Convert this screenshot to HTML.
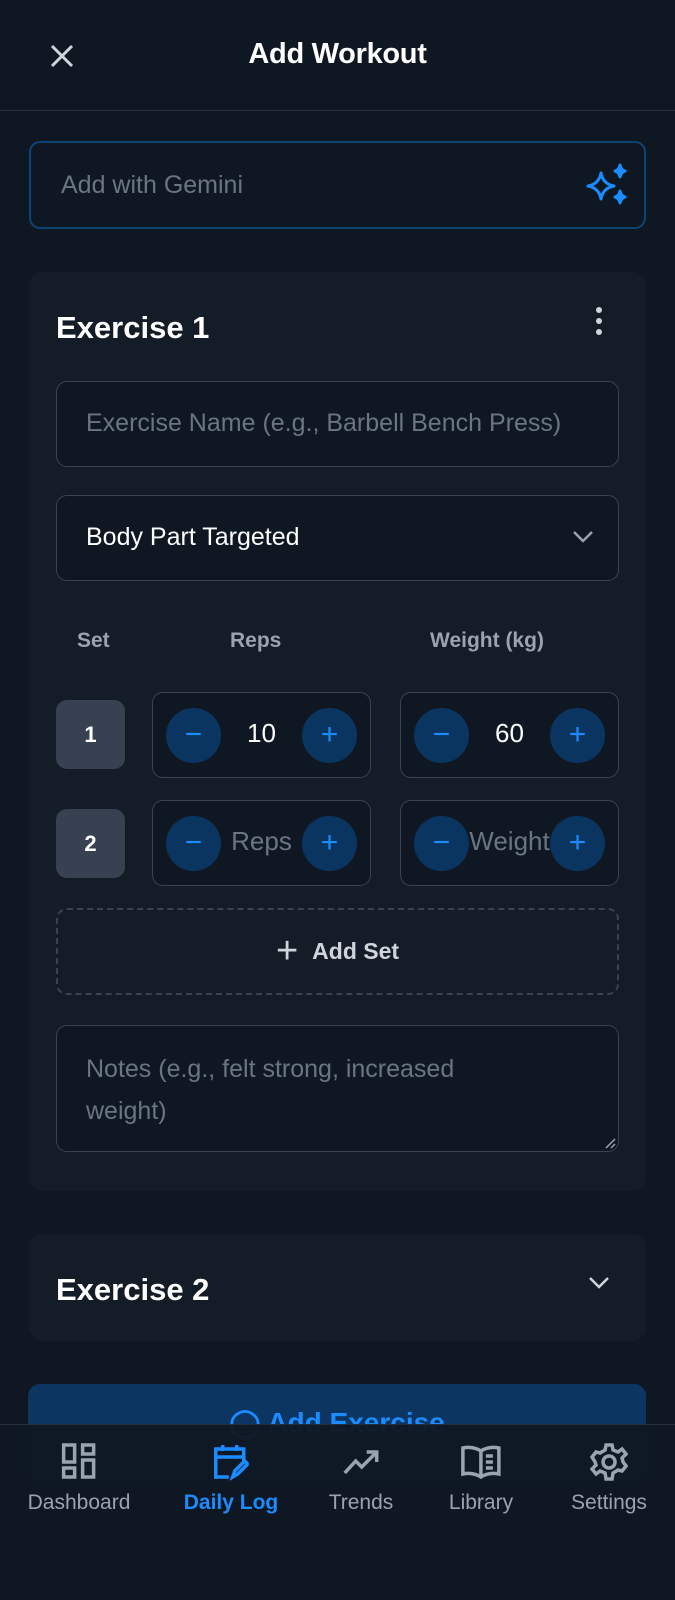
<!DOCTYPE html>
<html><head><meta charset="utf-8"><style>
*{box-sizing:border-box;margin:0;padding:0}
body{width:675px;height:1600px;background:#0f1822;font-family:"Liberation Sans",sans-serif;color:#fff;position:relative;overflow:hidden}
.abs{position:absolute}
.hdr-line{left:0;top:110px;width:675px;height:1px;background:#26303c}
.title{left:0;width:675px;top:38px;text-align:center;font-size:29px;font-weight:bold;letter-spacing:-0.3px}
.gem{left:29px;top:141px;width:617px;height:88px;border:2.5px solid #0d4478;border-radius:11px;background:#0f1822}
.gem span{position:absolute;left:30px;top:28px;font-size:25px;color:#6b7482}
.card{left:29px;background:#141c27;border-radius:14px;width:617px}
.h2{font-size:31px;font-weight:bold}
.inp{left:56px;width:563px;border:1.5px solid #394352;border-radius:11px;background:#0f1822}
.ph{color:#6b7482;font-size:25px}
.lbl{font-size:21px;color:#9aa3af;font-weight:bold}
.badge{left:56px;width:69px;height:69px;border-radius:11px;background:#374151;font-size:22px;font-weight:bold;text-align:center;line-height:69px}
.step{width:219px;height:86px;border:1.5px solid #394352;border-radius:11px;background:#0f1822}
.c{position:absolute;top:15px;width:55px;height:55px;border-radius:50%;background:#0b3561;color:#1a8cff;font-size:30px;text-align:center;line-height:53px}
.val{position:absolute;left:0;right:0;top:25px;text-align:center;font-size:26px}
.nav{left:0;top:1424px;width:675px;height:176px;background:rgba(16,24,34,0.96);border-top:1.5px solid #242e3a}
.ni{position:absolute;top:18px;text-align:center;font-size:21px;color:#9aa3af;transform:translateX(-50%)}
</style></head><body>
<svg class="abs" style="left:49px;top:43px" width="26" height="26" viewBox="0 0 26 26"><path d="M3 3L23 23M23 3L3 23" stroke="#d1d5db" stroke-width="3"/></svg>
<div class="abs title">Add Workout</div>
<div class="abs hdr-line"></div>
<div class="abs gem"><span>Add with Gemini</span>
<svg style="position:absolute;left:555px;top:20px" width="44" height="44" viewBox="0 0 44 44" fill="none" stroke="#1a8cff" stroke-width="3" stroke-linejoin="round"><path d="M15 10 Q17 21 28 23 Q17 25 15 36 Q13 25 2 23 Q13 21 15 10Z"/><path d="M34 2 Q35 7 39 8 Q35 9 34 14 Q33 9 29 8 Q33 7 34 2Z" fill="#1a8cff"/><path d="M34 28 Q35 33 39 34 Q35 35 34 40 Q33 35 29 34 Q33 33 34 28Z" fill="#1a8cff"/></svg></div>

<div class="abs card" style="top:272px;height:919px"></div>
<div class="abs h2" style="left:56px;top:310px">Exercise 1</div>
<svg class="abs" style="left:592px;top:306px" width="14" height="30"><circle cx="7" cy="4" r="3" fill="#d1d5db"/><circle cx="7" cy="15" r="3" fill="#d1d5db"/><circle cx="7" cy="26" r="3" fill="#d1d5db"/></svg>
<div class="abs inp" style="top:381px;height:86px;overflow:hidden"><div class="ph" style="position:absolute;left:29px;top:27px;white-space:nowrap;width:505px;overflow:hidden">Exercise Name (e.g., Barbell Bench Press)</div></div>
<div class="abs inp" style="top:495px;height:86px"><div style="position:absolute;left:29px;top:27px;font-size:25px">Body Part Targeted</div>
<svg style="position:absolute;left:515px;top:34px" width="22" height="14"><path d="M2 2L11 11L20 2" stroke="#9aa3af" stroke-width="2.5" fill="none"/></svg></div>
<div class="abs lbl" style="left:77px;top:629px">Set</div>
<div class="abs lbl" style="left:230px;top:629px">Reps</div>
<div class="abs lbl" style="left:430px;top:629px">Weight (kg)</div>

<div class="abs badge" style="top:700px">1</div>
<div class="abs step" style="left:152px;top:692px"><div class="val">10</div><div class="c" style="left:13px">−</div><div class="c" style="left:149px">+</div></div>
<div class="abs step" style="left:400px;top:692px"><div class="val">60</div><div class="c" style="left:13px">−</div><div class="c" style="left:149px">+</div></div>
<div class="abs badge" style="top:809px">2</div>
<div class="abs step" style="left:152px;top:800px"><div class="c" style="left:13px">−</div><div class="val" style="color:#6b7482">Reps</div><div class="c" style="left:149px">+</div></div>
<div class="abs step" style="left:400px;top:800px"><div class="c" style="left:13px">−</div><div class="val" style="color:#6b7482">Weight</div><div class="c" style="left:149px">+</div></div>

<div class="abs" style="left:56px;top:908px;width:563px;height:87px;border:2.5px dashed #394352;border-radius:11px;text-align:center;line-height:82px;font-size:23px;font-weight:bold;color:#d1d5db"><span style="font-size:38px;font-weight:normal;vertical-align:-4px;margin-right:14px">+</span>Add Set</div>
<div class="abs inp" style="top:1025px;height:127px"><div class="ph" style="position:absolute;left:29px;top:22px;line-height:42px;width:450px">Notes (e.g., felt strong, increased weight)</div>
<svg style="position:absolute;right:2px;bottom:2px" width="12" height="12"><path d="M11 2L2 11M11 7L7 11" stroke="#9aa3af" stroke-width="1.5"/></svg></div>

<div class="abs card" style="top:1234px;height:107px"></div>
<div class="abs h2" style="left:56px;top:1272px">Exercise 2</div>
<svg class="abs" style="left:588px;top:1276px" width="22" height="14"><path d="M2 2L11 11L20 2" stroke="#d1d5db" stroke-width="2.5" fill="none"/></svg>

<div class="abs" style="left:28px;top:1384px;width:618px;height:100px;background:#0d3561;border-radius:12px;text-align:center;font-size:28px;font-weight:bold;color:#1a8cff;padding-top:22px">◯ Add Exercise</div>

<div class="abs nav">
<div class="ni" style="left:79px"><svg width="34" height="36" viewBox="0 0 34 36" fill="none" stroke="#9aa3af" stroke-width="3.5"><rect x="2" y="2" width="11" height="17"/><rect x="21" y="2" width="11" height="9"/><rect x="2" y="25" width="11" height="9"/><rect x="21" y="17" width="11" height="17"/></svg><div style="margin-top:6px">Dashboard</div></div>
<div class="ni" style="left:231px;color:#1a8cff;font-weight:bold"><svg width="36" height="38" viewBox="0 0 36 38" fill="none" stroke="#1a8cff" stroke-width="3.5"><path d="M16 34H3V6H31V18M3 14H31M10 2V8M24 2V8"/><path d="M20 34L22 28L32 18L35 21L25 31Z"/></svg><div style="margin-top:4px">Daily Log</div></div>
<div class="ni" style="left:361px"><svg width="36" height="36" viewBox="0 0 36 36" fill="none" stroke="#9aa3af" stroke-width="3.5"><path d="M2 30L13 18L19 24L33 10M24 9H34V19"/></svg><div style="margin-top:6px">Trends</div></div>
<div class="ni" style="left:481px"><svg width="40" height="38" viewBox="0 0 40 38" fill="none" stroke="#9aa3af" stroke-width="3.5"><path d="M20 8Q12 3 2 5V31Q12 29 20 34Q28 29 38 31V5Q28 3 20 8ZM20 8V34M25 13H32M25 19H32M25 25H32"/></svg><div style="margin-top:4px">Library</div></div>
<div class="ni" style="left:609px"><svg width="38" height="38" viewBox="0 0 38 38" fill="none" stroke="#9aa3af" stroke-width="3.5"><circle cx="19" cy="19" r="6"/><path d="M16 2H22L23 7L28 9L32 6L36 11L32 15L33 19L36 23L32 28L28 27L23 30L22 36H16L15 30L10 28L6 31L2 26L6 22L5 19L2 14L6 9L10 10L15 7Z"/></svg><div style="margin-top:4px">Settings</div></div>
</div>
</body></html>
